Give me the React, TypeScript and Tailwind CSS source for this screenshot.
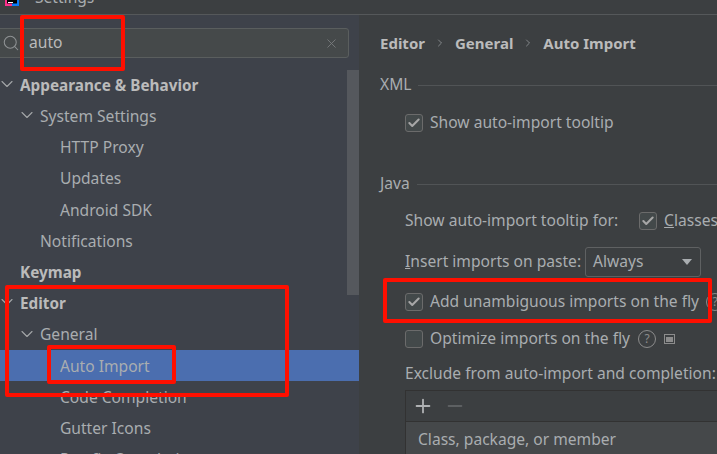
import { ChevronDown, ChevronRight, Search, X, Check, Plus, Minus } from "lucide-react";

type Row = { label: string; indent: number; bold?: boolean; open?: boolean; selected?: boolean };

const rows: Row[] = [
  { label: "Appearance & Behavior", indent: 20, bold: true, open: true },
  { label: "System Settings", indent: 40, open: true },
  { label: "HTTP Proxy", indent: 60 },
  { label: "Updates", indent: 60 },
  { label: "Android SDK", indent: 60 },
  { label: "Notifications", indent: 40 },
  { label: "Keymap", indent: 20, bold: true },
  { label: "Editor", indent: 20, bold: true, open: true },
  { label: "General", indent: 40, open: true },
  { label: "Auto Import", indent: 60, selected: true },
  { label: "Code Completion", indent: 60 },
  { label: "Gutter Icons", indent: 60 },
  { label: "Postfix Completion", indent: 60 },
];

function TreeRow({ row }: { row: Row }) {
  return (
    <div className={`relative flex h-[31.2px] shrink-0 items-center pt-[2px] ${row.selected ? "bg-[#4b6eaf]" : ""}`}>
      {row.open && (
        <ChevronDown
          size={20}
          strokeWidth={1.3}
          className="absolute top-[5px] text-[#a4a7a9]"
          style={{ left: row.indent - 23 }}
        />
      )}
      <span
        className={row.bold ? "text-[15.3px] font-bold text-[#bbbbbb]" : "text-[#a9adb0]"}
        style={{ marginLeft: row.indent }}
      >
        {row.label}
      </span>
    </div>
  );
}

function Box({ checked }: { checked?: boolean }) {
  return (
    <span className="flex h-[18px] w-[18px] shrink-0 items-center justify-center rounded-[3px] border border-[#6b6b6b] bg-[#43494a]">
      {checked && <Check size={14} strokeWidth={3.5} className="text-[#a7a7a7]" />}
    </span>
  );
}

function Help() {
  return (
    <span className="flex h-[18px] w-[18px] shrink-0 items-center justify-center rounded-full border border-[#8c8c8c] text-[12px] leading-none text-[#8c8c8c]">
      ?
    </span>
  );
}

export default function App() {
  return (
    <div className="relative flex h-[454px] w-[717px] flex-col overflow-hidden bg-[#3c3f41] font-['Noto_Sans','Open_Sans',sans-serif] text-[15.6px] text-[#a9adb0]">
      <div className="flex h-[15px] shrink-0 items-start overflow-hidden border-b border-[#55585a] bg-[#3c3f41]">
        <svg width="14" height="6" viewBox="0 0 14 6" className="ml-[5px] shrink-0">
          <rect width="14" height="6" fill="#fc318c" />
          <rect x="7" width="7" height="6" fill="#087cfa" />
          <rect x="2" width="10" height="3.5" fill="#000000" />
          <rect x="3" y="2" width="5" height="1" fill="#ffffff" />
        </svg>
        <span className="mt-[-14px] ml-[16px] text-[#a9adb0]">Settings</span>
      </div>

      <div className="flex min-h-0 flex-1">
        <div className="relative flex w-[359px] shrink-0 flex-col overflow-hidden bg-[#3e424a]">
          <div className="mt-[13px] ml-[-6px] flex h-[30px] w-[355px] shrink-0 items-center rounded-[3px] border border-[#5a5e5e] bg-[#45494a] pl-[7px]">
            <Search size={18} strokeWidth={1.4} className="text-[#8f9294]" />
            <span className="mr-[3px] h-0 w-0 border-x-[2px] border-t-[3px] border-x-transparent border-t-[#8f9294]" />
            <span className="ml-[2px] text-[#bbbbbb]">auto</span>
            <X size={15} strokeWidth={1.4} className="mr-[9px] ml-auto text-[#7a7d7f]" />
          </div>
          <div className="mt-[11px] flex flex-col">
            {rows.map((row) => (
              <TreeRow key={row.label} row={row} />
            ))}
          </div>
          <div className="absolute top-[55px] right-0 h-[225px] w-[12px] bg-[#55585d]" />
        </div>

        <div className="flex min-w-0 flex-1 flex-col pl-[21px]">
          <div className="mt-[16px] flex h-[24px] shrink-0 items-center text-[15px] font-bold text-[#bbbbbb]">
            Editor
            <ChevronRight size={12} strokeWidth={1.5} className="mx-[9px] text-[#9a9da0]" />
            General
            <ChevronRight size={12} strokeWidth={1.5} className="mx-[9px] text-[#9a9da0]" />
            Auto Import
          </div>

          <div className="mt-[18px] flex h-[24px] shrink-0 items-center">
            <span>XML</span>
            <div className="ml-[7px] h-px flex-1 bg-[#515456]" />
          </div>
          <div className="mt-[14px] ml-[25px] flex h-[24px] shrink-0 items-center gap-[7px]">
            <Box checked />
            <span>Show auto-import tooltip</span>
          </div>

          <div className="mt-[37px] flex h-[24px] shrink-0 items-center">
            <span>Java</span>
            <div className="ml-[7px] h-px flex-1 bg-[#515456]" />
          </div>
          <div className="mt-[13px] ml-[25px] flex h-[24px] shrink-0 items-center whitespace-nowrap">
            <span>Show auto-import tooltip for:</span>
            <span className="ml-[21px] flex items-center gap-[7px]">
              <Box checked />
              <span>
                <u>C</u>lasses
              </span>
            </span>
          </div>
          <div className="mt-[14px] ml-[25px] flex h-[30px] shrink-0 items-center whitespace-nowrap">
            <span>
              <u>I</u>nsert imports on paste:
            </span>
            <span className="ml-[4px] flex h-[30px] w-[116px] items-center justify-between rounded-[3px] border border-[#5f6162] bg-[#3c3f41] pr-[8px] pl-[7px]">
              Always
              <span className="h-0 w-0 border-x-[5px] border-t-[6px] border-x-transparent border-t-[#a9adb0]" />
            </span>
          </div>
          <div className="mt-[13px] ml-[25px] flex h-[24px] shrink-0 items-center gap-[7px] whitespace-nowrap">
            <Box checked />
            <span>Add unambiguous imports on the fly</span>
            <Help />
          </div>
          <div className="mt-[13px] ml-[25px] flex h-[24px] shrink-0 items-center gap-[7px] whitespace-nowrap">
            <Box />
            <span>Optimize imports on the fly</span>
            <span className="ml-[1px]">
              <Help />
            </span>
            <span className="ml-[1px] flex h-[10px] w-[11px] items-center justify-center border border-[#8c8c8c] bg-[#3c3f41]">
              <span className="h-[5px] w-[7px] bg-[#8c8c8c]" />
            </span>
          </div>
          <div className="mt-[11px] ml-[25px] flex h-[24px] shrink-0 items-center whitespace-nowrap">
            Exclude from auto-import and completion:
          </div>
          <div className="mt-[4px] ml-[25px] flex flex-1 flex-col border-t border-l border-[#323232]">
            <div className="flex h-[31px] shrink-0 items-center gap-[10px] border-b border-[#323232] pl-[6px]">
              <Plus size={22} strokeWidth={2} className="text-[#afb1b3]" />
              <Minus size={22} strokeWidth={2} className="text-[#5d6062]" />
            </div>
            <div className="flex flex-1 items-start bg-[#45484a] pt-[6px] pl-[12px] text-[#a9adb0]">
              Class, package, or member
            </div>
          </div>
        </div>
      </div>

      {/* red annotation boxes drawn on top of the screenshot */}
      <div className="absolute top-[15px] left-[20px] h-[56px] w-[105px] rounded-[2px] border-[4px] border-[#ff0f00]" />
      <div className="absolute top-[285px] left-[5px] h-[112px] w-[284px] rounded-[2px] border-[4px] border-[#ff0f00]" />
      <div className="absolute top-[345px] left-[47px] h-[39px] w-[129px] rounded-[2px] border-[4px] border-[#ff0f00]" />
      <div className="absolute top-[278px] left-[383px] h-[45px] w-[329px] rounded-[2px] border-[4px] border-[#ff0f00]" />
    </div>
  );
}
